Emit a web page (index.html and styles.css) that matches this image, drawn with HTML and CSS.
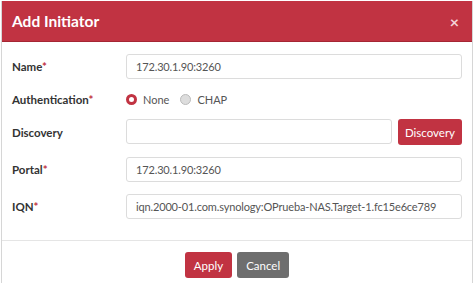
FILE: index.html
```html
<!DOCTYPE html>
<html lang="en">
<head>
    <meta charset="UTF-8">
    <meta name="viewport" content="width=device-width, initial-scale=1.0">
    <title>Add Initiator</title>
    <link rel="stylesheet" href="styles.css">
</head>
<body>
    <div class="modal">
        <div class="modal-header">
            <span class="modal-title">Add Initiator</span>
            <span class="close-btn">&times;</span>
        </div>

        <div class="modal-body">
            <div class="form-row">
                <label>Name<span class="req">*</span></label>
                <div class="text-input">172.30.1.90:3260</div>
            </div>

            <div class="form-row auth-row">
                <label>Authentication<span class="req">*</span></label>
                <div class="radios">
                    <span class="radio checked"></span>
                    <span class="radio-label">None</span>
                    <span class="radio"></span>
                    <span class="radio-label">CHAP</span>
                </div>
            </div>

            <div class="form-row">
                <label>Discovery</label>
                <div class="input-group">
                    <div class="text-input"></div>
                    <button class="btn btn-red btn-discovery">Discovery</button>
                </div>
            </div>

            <div class="form-row">
                <label>Portal<span class="req">*</span></label>
                <div class="text-input">172.30.1.90:3260</div>
            </div>

            <div class="form-row">
                <label>IQN<span class="req">*</span></label>
                <div class="text-input">iqn.2000-01.com.synology:OPrueba-NAS.Target-1.fc15e6ce789</div>
            </div>
        </div>

        <div class="modal-footer">
            <button class="btn btn-red">Apply</button>
            <button class="btn btn-gray">Cancel</button>
        </div>
    </div>
</body>
</html>
```

FILE: styles.css
```css
html, body {
    margin: 0;
    padding: 0;
    background-color: white;
    font-family: 'Lato', 'Liberation Sans', sans-serif;
    font-size: 11.5px;
    color: #333;
}

.modal {
    margin: 1px 1px 0 1px;
    border-left: 1px solid #d6d6d6;
    border-right: 1px solid #d6d6d6;
}

.modal-header {
    display: flex;
    justify-content: space-between;
    align-items: center;
    height: 40px;
    padding: 0 13px 0 10px;
    background-color: #c13342;
    border-bottom: 1px solid #a52634;
    color: white;
}

.modal-title {
    font-size: 15.5px;
    font-weight: 700;
}

.close-btn {
    font-size: 16px;
    font-weight: 700;
    color: #f4d4d8;
}

.modal-body {
    padding: 12px 10px 21px 10px;
    display: flex;
    flex-direction: column;
    gap: 12px;
    border-bottom: 1px solid #e5e5e5;
}

.form-row {
    display: grid;
    grid-template-columns: 114px 1fr;
    align-items: center;
}

.form-row label {
    font-weight: 700;
    color: #333;
}

.req {
    color: #c13342;
}

.text-input {
    height: 23px;
    line-height: 23px;
    padding: 0 9px;
    border: 1px solid #dcdcdc;
    border-radius: 3px;
    color: #555;
    font-size: 11px;
    letter-spacing: -0.15px;
    white-space: nowrap;
    overflow: hidden;
}

.auth-row {
    height: 16px;
}

.radios {
    display: flex;
    align-items: center;
}

.radio {
    box-sizing: border-box;
    width: 11px;
    height: 11px;
    border-radius: 50%;
    border: 1px solid #bbb;
    background-color: #ddd;
}

.radio.checked {
    border: 3px solid #c13342;
    background-color: white;
}

.radio-label {
    margin: 0 11px 0 6px;
    color: #555;
    font-size: 11px;
}

.input-group {
    display: flex;
    gap: 6px;
}

.input-group .text-input {
    flex: 1;
}

.btn {
    border: none;
    border-radius: 3px;
    color: white;
    font-family: 'Lato', 'Liberation Sans', sans-serif;
    font-size: 11.5px;
    height: 26px;
    padding: 0 8px;
    cursor: pointer;
}

.btn-discovery {
    width: 64px;
    padding: 0;
}

.btn-red {
    background-color: #c13342;
}

.btn-gray {
    background-color: #6e6e6e;
}

.modal-footer {
    display: flex;
    justify-content: center;
    gap: 5px;
    padding: 11px 0 8px 0;
}

.modal-footer .btn {
    padding: 0 9px;
}
```
